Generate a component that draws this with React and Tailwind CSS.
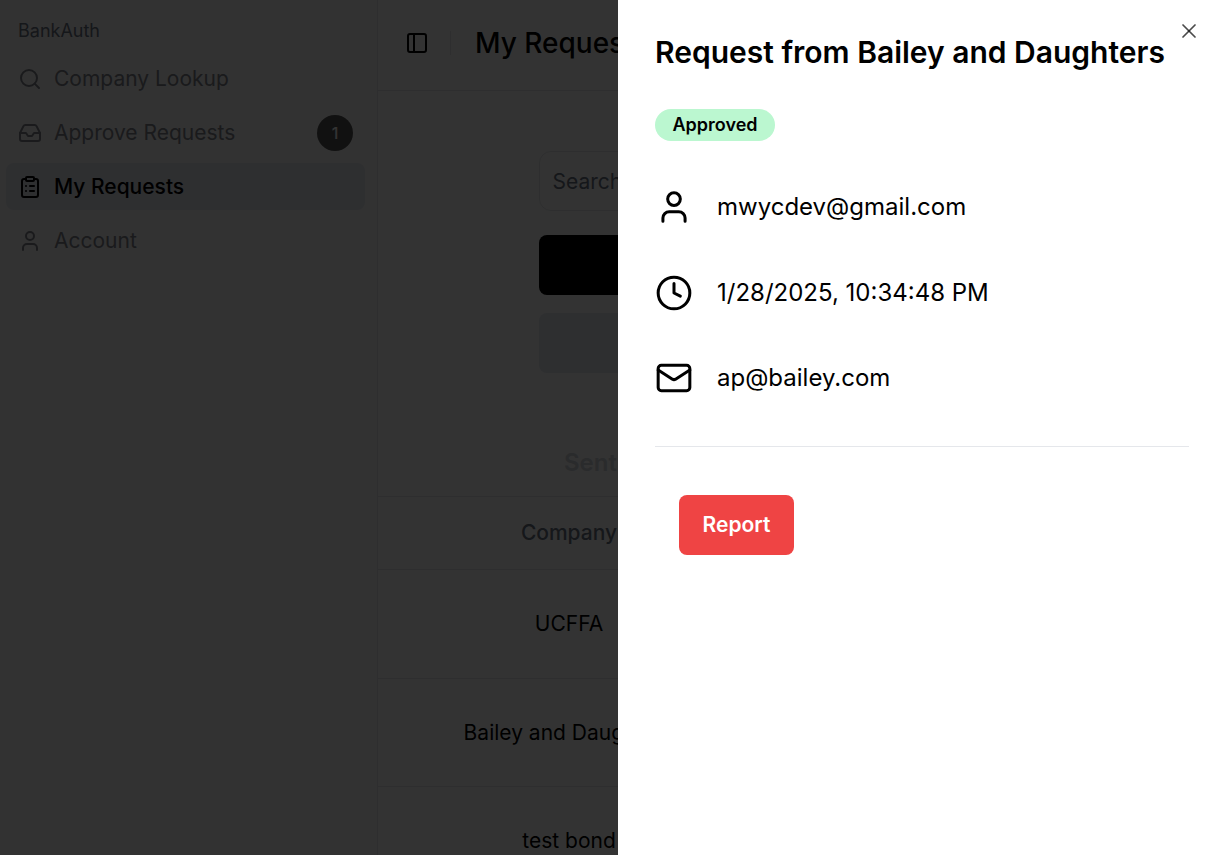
import React from "react";
import { Search, Inbox, ClipboardList, User, PanelLeft, Clock, Mail, X } from "lucide-react";

const navItems = [
  { label: "Company Lookup", icon: Search },
  { label: "Approve Requests", icon: Inbox, badge: 1 },
  { label: "My Requests", icon: ClipboardList, active: true },
  { label: "Account", icon: User },
];

const rows = ["UCFFA", "Bailey and Daughters", "test bond"];

const details = [
  { icon: User, text: "mwycdev@gmail.com" },
  { icon: Clock, text: "1/28/2025, 10:34:48 PM" },
  { icon: Mail, text: "ap@bailey.com" },
];

export default function App() {
  return (
    <div className="relative flex h-screen overflow-hidden bg-white font-['Inter',sans-serif] text-black">
      {/* Sidebar */}
      <aside className="flex w-[378px] shrink-0 flex-col border-r border-gray-200 bg-[#fafafa] pt-[19px] pr-3 pl-[6px]">
        <div className="px-3 text-lg leading-6 text-gray-500">BankAuth</div>
        <nav className="mt-3 flex flex-col gap-[7px]">
          {navItems.map(({ label, icon: Icon, badge, active }) => (
            <div
              key={label}
              className={`flex h-[47px] items-center gap-3 rounded-lg px-3 text-[21px] ${active ? "bg-[#e5e8f0] font-medium text-black" : "text-[#80848c]"}`}
            >
              <Icon className="h-6 w-6 shrink-0" />
              <span>{label}</span>
              {badge && (
                <span className="ml-auto flex h-9 w-9 items-center justify-center rounded-full bg-[#555555] text-base font-medium text-white">
                  {badge}
                </span>
              )}
            </div>
          ))}
        </nav>
      </aside>

      {/* Main */}
      <main className="min-w-0 flex-1">
        <header className="flex h-[91px] items-center border-b border-gray-200 pb-1 pl-[27px]">
          <PanelLeft className="h-6 w-6" />
          <div className="mr-6 ml-[21px] h-6 w-px bg-gray-200" />
          <h1 className="text-[28px] font-medium whitespace-nowrap">My Requests</h1>
        </header>

        <div className="mx-auto mt-[60px] flex w-[524px] flex-col gap-[18px]">
          <div className="mb-[6px] flex h-[60px] items-center rounded-xl border border-gray-200 px-[13px] pt-px text-[21px] text-gray-500">
            Search...
          </div>
          <div className="h-[60px] rounded-lg bg-black" />
          <div className="h-[60px] rounded-lg bg-[#e5e8f0]" />
        </div>

        <h2 className="mt-[74px] pl-[186px] text-2xl font-semibold whitespace-nowrap text-gray-300">Sent Requests</h2>

        <div className="mt-[17px] border-t border-gray-200">
          <div className="flex h-[73px] items-center border-b border-gray-200 text-[21px] font-medium text-gray-500">
            <div className="w-[382px] shrink-0 text-center">Company</div>
          </div>
          {rows.map((name) => (
            <div key={name} className="flex h-[108.5px] items-center border-b border-gray-200 text-[21px]">
              <div className="w-[382px] shrink-0 text-center">{name}</div>
            </div>
          ))}
        </div>
      </main>

      {/* Overlay */}
      <div className="absolute inset-0 bg-black/80" />

      {/* Drawer */}
      <div className="absolute inset-y-0 right-0 w-[605px] bg-white pt-[31px] pr-[34px] pl-[37px]">
        <X className="absolute top-[19px] right-[22px] h-6 w-6 text-black/70" strokeWidth={1.75} />
        <h2 className="text-[30px] leading-[42px] font-semibold whitespace-nowrap">Request from Bailey and Daughters</h2>
        <div className="mt-9 inline-flex h-8 w-[120px] items-center justify-center rounded-full bg-[#bbf7d0] text-lg font-semibold">
          Approved
        </div>
        <div className="mt-[23.5px] flex flex-col">
          {details.map(({ icon: Icon, text }) => (
            <div key={text} className="flex h-[85.5px] items-center gap-6 text-2xl">
              <Icon className="h-[38px] w-[38px] shrink-0" strokeWidth={1.9} />
              <span>{text}</span>
            </div>
          ))}
        </div>
        <div className="mt-[24.5px] border-t border-gray-200" />
        <button className="mt-12 ml-6 h-[60px] w-[115px] rounded-lg bg-[#ef4444] text-[21px] font-semibold text-white">Report</button>
      </div>
    </div>
  );
}
